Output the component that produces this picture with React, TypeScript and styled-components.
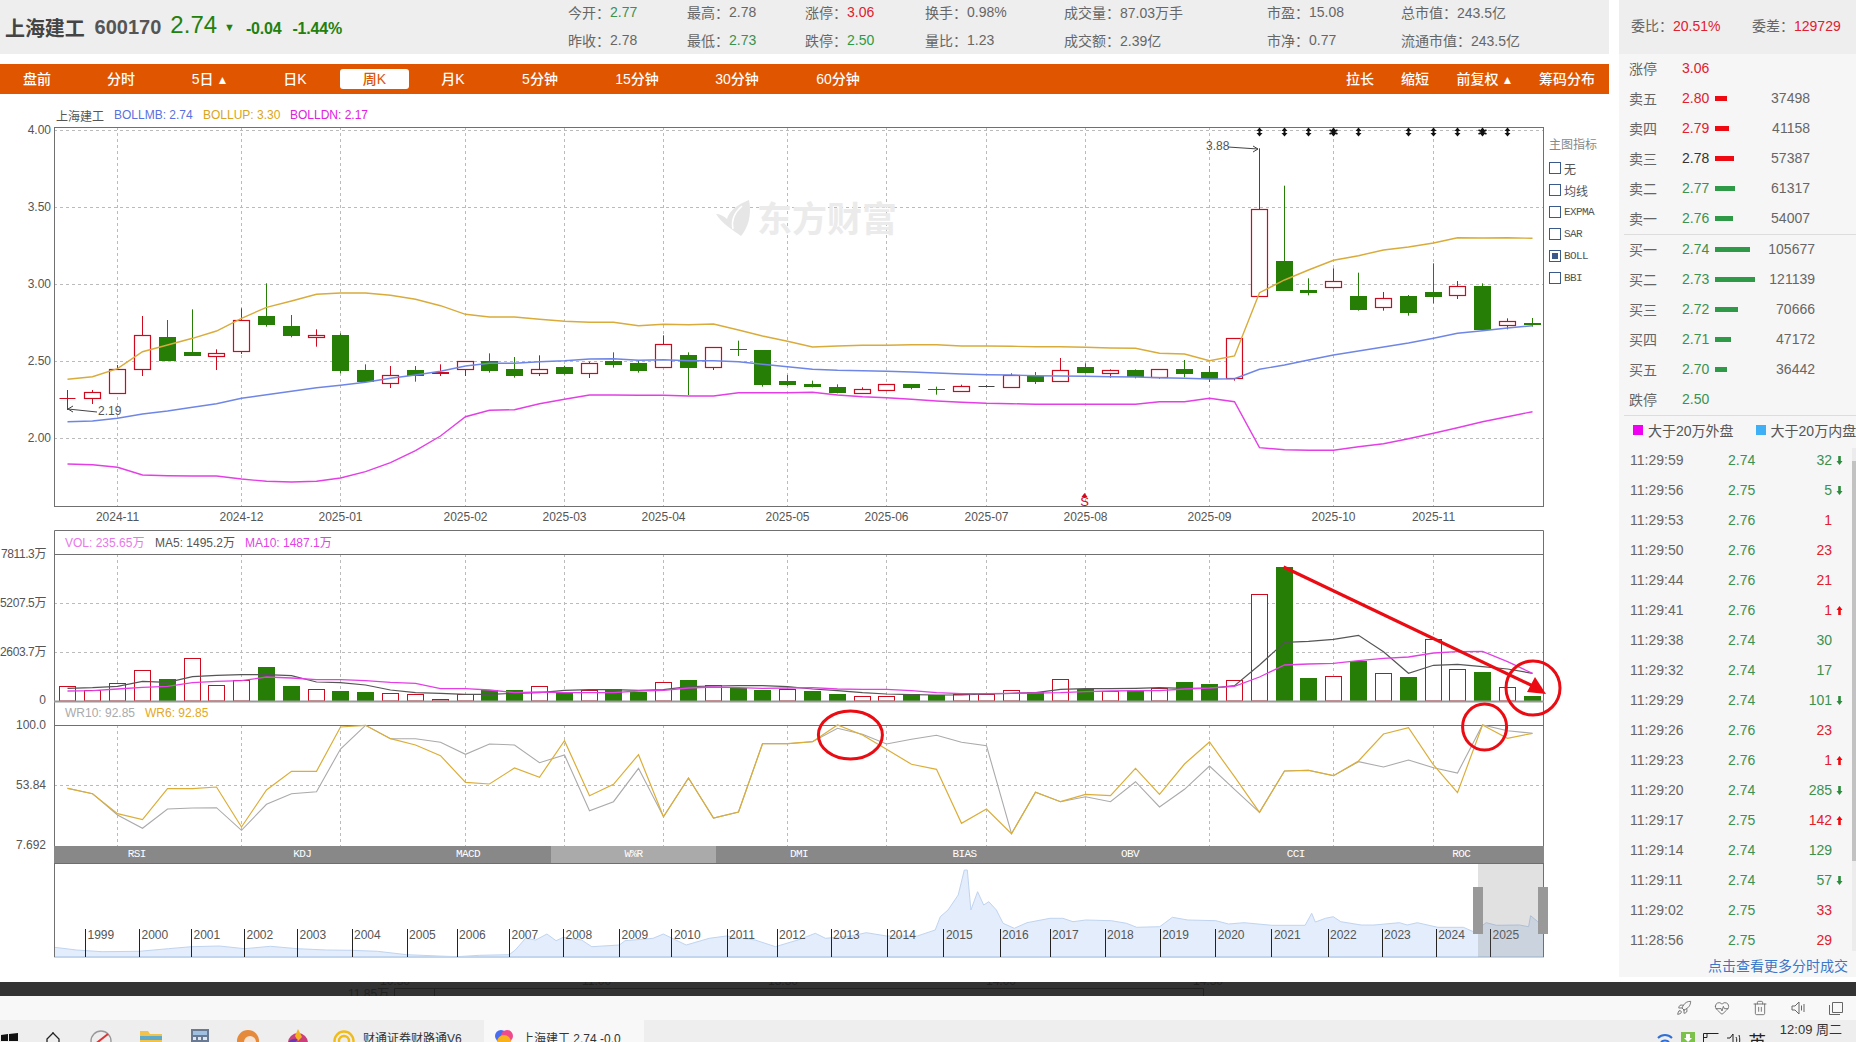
import React from 'react';
import styled, { createGlobalStyle } from 'styled-components';
import { Rocket, HeartPulse, Trash2 } from 'lucide-react';

const GlobalStyle = createGlobalStyle`
  html, body { margin: 0; padding: 0; background: #fff; width: 1856px; height: 1042px; overflow: hidden; }
  body { font-family: "Liberation Sans", "Noto Sans CJK SC", sans-serif; color: #555; }
  * { box-sizing: border-box; }
`;

const GREEN = '#267e07';
const RED = '#cf0a1f';
const cx = (i: number) => Math.round(67.4 + i * 24.82) + 0.5;
const mainY = (z: number) => 100 + z / 3;
const lowY = (z: number) => 525 + z / 3;

type C = [string, number, number, number, number];
const candles: C[] = [
  ['d', 895, 895, 870, 930], ['r', 877, 895, 870, 912], ['r', 808, 878, 795, 878], ['r', 706, 808, 648, 828],
  ['g', 711, 783, 660, 783], ['g', 756, 768, 628, 768], ['r', 760, 767, 748, 810], ['r', 661, 752, 625, 762],
  ['g', 648, 674, 550, 680], ['g', 678, 707, 645, 712], ['r', 706, 712, 688, 740], ['g', 705, 812, 700, 820],
  ['g', 810, 845, 793, 848], ['r', 826, 850, 798, 864], ['g', 810, 827, 798, 845], ['f', 817, 821, 793, 828],
  ['r', 784, 808, 784, 828], ['g', 784, 812, 760, 818], ['g', 807, 827, 771, 833], ['r', 808, 820, 766, 828],
  ['g', 801, 821, 797, 824], ['r', 790, 818, 785, 834], ['g', 783, 794, 757, 803], ['g', 789, 812, 782, 818],
  ['r', 733, 802, 706, 802], ['g', 765, 803, 757, 885], ['r', 742, 802, 742, 810], ['g', 747, 751, 722, 768],
  ['g', 750, 855, 750, 860], ['g', 843, 855, 825, 858], ['g', 852, 860, 842, 862], ['g', 861, 878, 853, 880],
  ['r', 868, 878, 862, 880], ['r', 853, 871, 853, 873], ['g', 852, 863, 852, 868], ['g', 866, 869, 860, 884],
  ['r', 859, 872, 854, 876], ['k', 859, 859, 855, 862], ['r', 826, 860, 820, 862], ['g', 827, 845, 816, 852],
  ['r', 811, 844, 774, 845], ['g', 802, 818, 790, 820], ['r', 811, 820, 808, 833], ['g', 811, 832, 808, 835],
  ['r', 808, 832, 808, 836], ['g', 807, 821, 780, 832], ['g', 817, 836, 798, 846], ['r', 715, 835, 715, 842],
  ['r', 328, 589, 145, 589], ['g', 483, 572, 257, 572], ['g', 570, 578, 535, 586], ['r', 544, 562, 505, 566],
  ['g', 588, 630, 518, 632], ['r', 595, 620, 576, 632], ['g', 588, 638, 585, 647], ['g', 576, 590, 490, 610],
  ['r', 558, 586, 543, 597], ['g', 558, 690, 550, 690], ['r', 663, 674, 655, 688], ['g', 669, 675, 654, 680],
];

const bollUp = [838, 830, 806, 755, 735, 715, 693, 655, 622, 603, 583, 579, 579, 586, 598, 617, 643, 651, 651, 658, 664, 667, 667, 677, 673, 674, 672, 690, 708, 724, 741, 738, 736, 736, 734, 734, 738, 738, 739, 740, 740, 742, 744, 745, 760, 762, 782, 768, 578, 540, 510, 481, 467, 450, 441, 429, 413, 414, 413, 415];
const bollMid = [965, 963, 955, 942, 933, 922, 911, 895, 884, 874, 863, 856, 847, 835, 825, 814, 798, 790, 790, 785, 782, 777, 776, 781, 779, 782, 782, 785, 793, 800, 808, 811, 812, 814, 816, 819, 822, 824, 825, 827, 828, 829, 830, 831, 833, 835, 837, 836, 808, 795, 780, 765, 753, 741, 729, 715, 700, 692, 684, 677];
const bollDn = [1092, 1094, 1102, 1125, 1127, 1128, 1128, 1137, 1144, 1146, 1144, 1134, 1115, 1088, 1052, 1008, 950, 931, 929, 911, 898, 885, 885, 886, 886, 888, 888, 878, 878, 878, 877, 885, 890, 893, 898, 903, 907, 910, 911, 913, 913, 913, 913, 913, 905, 905, 895, 905, 1043, 1049, 1051, 1051, 1040, 1031, 1016, 1000, 983, 965, 950, 935];

const volTop = [484, 495, 475, 436, 462, 400, 481, 466, 426, 483, 493, 498, 501, 505, 508, 523, 508, 495, 495, 484, 500, 494, 493, 500, 472, 465, 481, 488, 495, 493, 498, 507, 514, 514, 507, 511, 507, 507, 496, 502, 463, 493, 498, 495, 488, 471, 477, 466, 208, 126, 459, 454, 408, 445, 456, 343, 433, 441, 487, 513];
const volGreen = new Set([4, 8, 9, 11, 12, 17, 18, 20, 22, 23, 25, 27, 28, 30, 31, 34, 35, 39, 41, 43, 45, 46, 49, 50, 52, 54, 57, 59]);
const ma5 = [490, 488, 484, 469, 472, 455, 451, 449, 449, 452, 471, 473, 480, 495, 503, 505, 508, 508, 505, 503, 496, 494, 494, 496, 494, 485, 483, 482, 482, 485, 492, 497, 503, 507, 509, 510, 510, 507, 505, 503, 493, 491, 491, 490, 488, 490, 490, 482, 420, 352, 349, 343, 331, 380, 445, 421, 418, 425, 432, 445];
const ma10 = [498, 497, 492, 487, 484, 473, 469, 467, 456, 459, 464, 464, 467, 472, 475, 491, 491, 495, 503, 501, 503, 503, 503, 498, 496, 489, 486, 488, 490, 489, 488, 492, 493, 493, 497, 503, 506, 506, 505, 504, 503, 500, 498, 497, 497, 492, 489, 484, 456, 420, 417, 415, 407, 400, 396, 384, 380, 379, 410, 445];
const wr6 = [790, 806, 866, 884, 791, 791, 786, 906, 795, 739, 739, 606, 601, 641, 660, 692, 772, 777, 729, 757, 647, 812, 778, 689, 875, 759, 879, 861, 656, 656, 650, 600, 630, 673, 718, 733, 895, 852, 926, 802, 830, 808, 812, 730, 808, 717, 651, 755, 862, 738, 736, 752, 708, 627, 608, 720, 803, 600, 640, 625];
const wr10 = [790, 806, 870, 910, 852, 849, 848, 916, 838, 806, 800, 672, 601, 641, 641, 652, 688, 657, 660, 713, 690, 857, 830, 730, 875, 759, 879, 861, 656, 656, 650, 610, 628, 657, 643, 631, 652, 662, 926, 802, 830, 815, 830, 770, 846, 793, 723, 793, 862, 738, 736, 752, 710, 726, 705, 728, 744, 600, 617, 625];

const gridX = [2, 7, 11, 16, 20, 24, 29, 33, 37, 41, 46, 51, 55].map(cx);
const monthLabels = ['2024-11', '2024-12', '2025-01', '2025-02', '2025-03', '2025-04', '2025-05', '2025-06', '2025-07', '2025-08', '2025-09', '2025-10', '2025-11'];
const toPoints = (a: number[], f: (z: number) => number) => a.map((z, i) => `${cx(i)},${f(z).toFixed(1)}`).join(' ');

const yearX = [85, 139, 191, 244, 297, 351.5, 406.6, 456.6, 509, 563, 619, 671.4, 726.5, 776.5, 830.6, 886.7, 943.4, 999.5, 1049.5, 1104.6, 1159.7, 1215.3, 1271.4, 1327.5, 1381.6, 1435.7, 1490];
const miniA = [[107, 292], [150, 300], [200, 305], [273, 304], [330, 296], [375, 290], [430, 288], [479, 296], [530, 289], [583, 296], [640, 300], [689, 301], [740, 304], [797, 314], [860, 318], [895, 320], [940, 316], [998, 314], [1010, 300], [1030, 265], [1050, 270], [1072, 252], [1090, 272], [1104, 262], [1140, 270], [1160, 290], [1214, 285], [1225, 272], [1280, 265], [1300, 252], [1345, 285], [1390, 265], [1424, 258], [1480, 270], [1520, 290]];
const miniB = [[0, 268], [30, 250], [50, 265], [100, 258], [130, 248], [170, 258], [230, 258], [265, 240], [275, 200], [290, 180], [310, 135], [322, 60], [328, 60], [335, 180], [348, 125], [360, 165], [370, 155], [385, 180], [398, 220], [420, 235], [445, 218], [490, 205], [515, 205], [535, 215], [560, 210], [610, 212], [640, 220], [660, 232], [705, 230], [730, 202], [760, 210], [815, 212], [840, 222], [870, 218], [925, 226], [990, 226], [1003, 190], [1010, 216], [1030, 205], [1045, 200], [1060, 215], [1100, 225], [1125, 225], [1175, 218], [1190, 225], [1210, 218], [1250, 232], [1300, 232], [1320, 245], [1345, 218], [1365, 226], [1410, 225], [1428, 230], [1432, 197], [1446, 215], [1457, 215]];
const miniPts = [
  ...miniA.map(([x, y]) => `${(x / 1.96).toFixed(1)},${(850 + y / 3).toFixed(1)}`),
  ...miniB.map(([x, y]) => `${(800 + x / 1.96).toFixed(1)},${(850 + y / 3).toFixed(1)}`),
];

const Page = styled.div`
  width: 1856px;
  height: 1042px;
  display: flex;
  flex-direction: column;
  overflow: hidden;
  background: #fff;
`;
const Top = styled.div`
  display: flex;
  height: 982px;
`;
const LeftCol = styled.div`
  width: 1609px;
  flex: none;
`;
const RightCol = styled.div`
  width: 237px;
  height: 977px;
  margin-left: 10px;
  background: #f6f6f6;
  flex: none;
  overflow: hidden;
`;

const Header = styled.div`
  height: 54px;
  background: #eee;
  display: flex;
`;
const TitleBlock = styled.div`
  width: 568px;
  flex: none;
  padding-left: 5px;
  display: flex;
  align-items: center;
`;
const StockName = styled.span`
  font: 700 20px "Noto Sans CJK SC", sans-serif;
  color: #444;
  letter-spacing: -0.1px;
`;
const StockCode = styled.span`
  font-size: 20px;
  font-weight: 700;
  color: #555;
  margin-left: 10px;
`;
const LastPrice = styled.span`
  font-size: 24px;
  color: #23800f;
  margin-left: 9px;
  margin-top: -4px;
`;
const DownMark = styled.span`
  font-size: 11px;
  color: #23800f;
  margin-left: 7px;
`;
const Change = styled.span<{ $gap: number }>`
  font-size: 16px;
  font-weight: 700;
  letter-spacing: -0.2px;
  color: #23800f;
  margin-left: ${p => p.$gap}px;
  margin-top: 3px;
`;
const StatGrid = styled.div`
  display: grid;
  grid-template-columns: 119px 118px 120px 139px 203px 134px 140px;
  grid-template-rows: 24px 32px;
`;
const Stat = styled.div`
  font-size: 14px;
  color: #666;
  display: flex;
  align-items: center;
  white-space: nowrap;
`;
const Val = styled.span<{ $c?: string }>`
  color: ${p => p.$c || '#666'};
`;

const Toolbar = styled.div`
  height: 30px;
  margin-top: 10px;
  background: #e05500;
  display: flex;
  align-items: center;
`;
const Tab = styled.div<{ $w: number; $push?: boolean }>`
  width: ${p => p.$w}px;
  flex: none;
  margin-left: ${p => (p.$push ? 'auto' : '0')};
  display: flex;
  justify-content: center;
`;
const TabLabel = styled.span<{ $active?: boolean }>`
  font: 500 14px "Liberation Sans", "Noto Sans CJK SC", sans-serif;
  height: 20px;
  line-height: 20px;
  text-align: center;
  white-space: nowrap;
  color: ${p => (p.$active ? '#e05500' : '#fff')};
  background: ${p => (p.$active ? '#fff' : 'transparent')};
  width: ${p => (p.$active ? '69px' : 'auto')};
  border-radius: ${p => (p.$active ? '3px' : '0')};
`;
const TinyUp = styled.span`
  font-size: 12px;
  margin-left: 3px;
`;

const LegendLine = styled.div`
  height: 33px;
  padding-left: 56px;
  display: flex;
  align-items: center;
  font-size: 12px;
  padding-top: 9px;
`;
const LegendItem = styled.span<{ $c: string; $w: number }>`
  color: ${p => p.$c};
  width: ${p => p.$w}px;
  flex: none;
`;

const MainRow = styled.div`
  display: flex;
  height: 403px;
`;
const ChartSvg = styled.svg`
  display: block;
  flex: none;
  overflow: visible;
  font-family: "Liberation Sans", "Noto Sans CJK SC", sans-serif;
  font-size: 12px;
  fill: #555;
`;
const BandSvg = styled.svg`
  display: block;
  font-family: "Liberation Sans", "Noto Sans CJK SC", sans-serif;
  font-size: 12px;
  fill: #222;
`;
const SidePanel = styled.div`
  padding: 9px 0 0 4px;
  width: 64px;
  flex: none;
`;
const SideTitle = styled.div`
  font-size: 12px;
  color: #888;
  height: 18px;
  line-height: 18px;
  margin-bottom: 3px;
  white-space: nowrap;
`;
const SideRow = styled.div`
  height: 22px;
  display: flex;
  align-items: center;
  gap: 3px;
`;
const CheckBox = styled.span<{ $on?: boolean }>`
  width: 12px;
  height: 12px;
  flex: none;
  border: 1px solid #3b5a8c;
  background: #fff;
  display: flex;
  align-items: center;
  justify-content: center;
  &::after {
    content: '';
    width: 6px;
    height: 6px;
    background: ${p => (p.$on ? '#3b5a8c' : 'transparent')};
  }
`;
const SideLabel = styled.span<{ $mono?: boolean }>`
  font: ${p => (p.$mono ? '11px "Liberation Mono", monospace' : '12px "Noto Sans CJK SC", sans-serif')};
  letter-spacing: ${p => (p.$mono ? '-0.6px' : '0')};
  color: #555;
`;

const TabsBar = styled.div`
  display: grid;
  grid-template-columns: repeat(9, 1fr);
  width: 1490px;
  height: 18px;
  margin-left: 54px;
  background: #888;
  border-bottom: 1px solid #6e6e6e;
`;
const IndTab = styled.div<{ $active?: boolean }>`
  background: ${p => (p.$active ? '#aaa' : 'transparent')};
  color: #fff;
  font: 11px/17px "Liberation Mono", monospace;
  letter-spacing: -0.6px;
  text-align: center;
`;

const DarkBand = styled.div`
  height: 14px;
  background: #333;
  overflow: hidden;
`;
const Strip = styled.div`
  height: 24px;
  background: #f8f8f8;
  display: flex;
  justify-content: flex-end;
  align-items: center;
  gap: 22px;
  padding-right: 12px;
  color: #666;
`;
const Taskbar = styled.div`
  height: 22px;
  background: #eee;
  display: flex;
  overflow: hidden;
`;
const TaskItem = styled.div<{ $w: number; $top?: number }>`
  width: ${p => p.$w}px;
  flex: none;
  display: flex;
  justify-content: center;
  padding-top: ${p => p.$top ?? 8}px;
`;
const TaskApp = styled.div<{ $w: number; $pad: number; $active?: boolean }>`
  width: ${p => p.$w}px;
  flex: none;
  padding: 8px 0 0 ${p => p.$pad}px;
  display: flex;
  gap: 8px;
  background: ${p => (p.$active ? '#f8f8f8' : 'transparent')};
`;
const TaskText = styled.span`
  font-size: 12px;
  line-height: 22px;
  color: #333;
  white-space: nowrap;
`;
const Tray = styled.div`
  margin-left: auto;
  display: flex;
  padding-right: 14px;
`;
const TrayGlyph = styled.span`
  width: 23px;
  text-align: center;
  font: 18px/18px "Noto Sans CJK SC", sans-serif;
  color: #222;
  margin-top: 12px;
`;
const Clock = styled.span`
  margin-left: 11px;
  font-size: 13px;
  line-height: 20px;
  color: #333;
  white-space: nowrap;
`;

const WeiBar = styled.div`
  height: 54px;
  background: #eee;
  display: flex;
  align-items: center;
  font-size: 14px;
  color: #666;
  padding: 0 0 4px 12px;
`;
const WeiItem = styled.span<{ $w: number }>`
  width: ${p => p.$w}px;
  flex: none;
  white-space: nowrap;
`;
const WeiVal = styled.span`
  color: #e0202f;
`;
const Book = styled.div`
  padding-left: 10px;
`;
const BookSection = styled.div`
  border-bottom: 1px solid #ddd;
  margin-left: -5px;
  padding-left: 5px;
  padding-bottom: 1px;
  margin-top: -1px;
`;
const BookRow = styled.div`
  height: 30px;
  display: flex;
  align-items: center;
  font-size: 14px;
`;
const BookLabel = styled.span`
  width: 53px;
  flex: none;
  color: #666;
`;
const BookPrice = styled.span<{ $c: string }>`
  width: 33px;
  flex: none;
  color: ${p => p.$c};
`;
const BarCell = styled.span`
  width: 40px;
  flex: none;
  display: flex;
`;
const VolBar = styled.span<{ $w: number; $c: string }>`
  width: ${p => p.$w}px;
  height: 5px;
  background: ${p => p.$c};
`;
const BookQty = styled.span<{ $w: number }>`
  width: ${p => p.$w}px;
  flex: none;
  text-align: right;
  color: #666;
`;
const BigLegend = styled.div`
  height: 30px;
  margin-top: -1px;
  display: flex;
  align-items: center;
  font: 14px "Liberation Sans", "Noto Sans CJK SC", sans-serif;
  color: #555;
  padding-left: 14px;
  white-space: nowrap;
`;
const Swatch = styled.span<{ $c: string; $gap: number }>`
  width: 10px;
  height: 10px;
  flex: none;
  background: ${p => p.$c};
  margin-right: 5px;
  margin-left: ${p => p.$gap}px;
`;
const TickList = styled.div`
  position: relative;
  height: 511px;
`;
const Track = styled.div`
  position: absolute;
  right: 0;
  top: 3px;
  width: 4px;
  height: 503px;
  background: #ececec;
`;
const Thumb = styled.div`
  margin-top: 13px;
  height: 400px;
  background: #c2c2c2;
`;
const TickRow = styled.div`
  height: 30px;
  display: flex;
  align-items: center;
  font-size: 14px;
  padding-left: 11px;
`;
const TickTime = styled.span`
  width: 98px;
  flex: none;
  color: #666;
`;
const TickPrice = styled.span`
  width: 34px;
  flex: none;
  color: #3a9150;
`;
const TickQty = styled.span<{ $c: string }>`
  width: 70px;
  flex: none;
  text-align: right;
  color: ${p => p.$c};
`;
const TickArrow = styled.svg`
  margin-left: 4px;
  flex: none;
`;
const MoreLink = styled.div`
  text-align: right;
  font-size: 14px;
  line-height: 20px;
  padding-right: 8px;
  color: #3a77c9;
`;

const statCells: [string, string, string?][] = [
  ['今开：', '2.77', '#3a9150'], ['最高：', '2.78'], ['涨停：', '3.06', '#e0202f'], ['换手：', '0.98%'], ['成交量：', '87.03万手'], ['市盈：', '15.08'], ['总市值：', '243.5亿'],
  ['昨收：', '2.78'], ['最低：', '2.73', '#3a9150'], ['跌停：', '2.50', '#2d9a44'], ['量比：', '1.23'], ['成交额：', '2.39亿'], ['市净：', '0.77'], ['流通市值：', '243.5亿'],
];

const tabs: [React.ReactNode, number, boolean?][] = [
  ['盘前', 74], ['分时', 94], [<>5日<TinyUp>▲</TinyUp></>, 84], ['日K', 86], ['周K', 73, true], ['月K', 84],
  ['5分钟', 90], ['15分钟', 104], ['30分钟', 96], ['60分钟', 106],
];
const tabsRight: [React.ReactNode, number][] = [
  ['拉长', 50], ['缩短', 60], [<>前复权<TinyUp>▲</TinyUp></>, 80], ['筹码分布', 84],
];

const BR = '#e0202f';
const BG = '#3a9150';
const sells: [string, string, string, number, string, string][] = [
  ['卖五', '2.80', BR, 12, '#ee0a10', '37498'],
  ['卖四', '2.79', BR, 14, '#ee0a10', '41158'],
  ['卖三', '2.78', '#333', 19, '#ee0a10', '57387'],
  ['卖二', '2.77', BG, 20, '#2e9a48', '61317'],
  ['卖一', '2.76', BG, 18, '#2e9a48', '54007'],
];
const buys: [string, string, number, string][] = [
  ['买一', '2.74', 35, '105677'], ['买二', '2.73', 40, '121139'], ['买三', '2.72', 23, '70666'], ['买四', '2.71', 16, '47172'], ['买五', '2.70', 12, '36442'],
];
const ticks: [string, string, string, string, string][] = [
  ['11:29:59', '2.74', '32', 'g', 'd'], ['11:29:56', '2.75', '5', 'g', 'd'], ['11:29:53', '2.76', '1', 'r', ''], ['11:29:50', '2.76', '23', 'r', ''],
  ['11:29:44', '2.76', '21', 'r', ''], ['11:29:41', '2.76', '1', 'r', 'u'], ['11:29:38', '2.74', '30', 'g', ''], ['11:29:32', '2.74', '17', 'g', ''],
  ['11:29:29', '2.74', '101', 'g', 'd'], ['11:29:26', '2.76', '23', 'r', ''], ['11:29:23', '2.76', '1', 'r', 'u'], ['11:29:20', '2.74', '285', 'g', 'd'],
  ['11:29:17', '2.75', '142', 'r', 'u'], ['11:29:14', '2.74', '129', 'g', ''], ['11:29:11', '2.74', '57', 'g', 'd'], ['11:29:02', '2.75', '33', 'r', ''],
  ['11:28:56', '2.75', '29', 'r', ''],
];

const Dash = { stroke: '#bbb', strokeWidth: 1, strokeDasharray: '3 3' };
const FRAME = '#707070';

function MainChart() {
  const marks = [48, 49, 50, 51, 52, 54, 55, 56, 57, 58];
  return (
    <ChartSvg width={1545} height={403} viewBox="0 127 1545 403">
      {gridX.map(x => <line key={x} x1={x} x2={x} y1={127} y2={506} {...Dash} />)}
      {[130, 207, 284, 361, 438].map(y => <line key={y} x1={54} x2={1543} y1={y + 0.5} y2={y + 0.5} {...Dash} />)}
      <rect x={54.5} y={127.5} width={1489} height={379} fill="none" stroke={FRAME} />
      {['4.00', '3.50', '3.00', '2.50', '2.00'].map((t, i) => <text key={t} x={51} y={134 + i * 77} textAnchor="end">{t}</text>)}
      {monthLabels.map((t, i) => <text key={t} x={gridX[i]} y={521} textAnchor="middle">{t}</text>)}
      <path d="M749 200C752 215 748 228 741 236C733 230 722 224 716 214C720 214 724 216 727 219C729 211 738 204 749 200Z" fill="#e6e6e6" />
      <path d="M742 206C735 212 731 220 733 229" stroke="#fff" strokeWidth={1.5} fill="none" />
      <text x={757} y={232} fontSize={35} fontWeight={700} fill="#ebebeb" fontFamily='"Noto Sans CJK SC", sans-serif'>东方财富</text>
      {candles.map(([t, bt, bb, wt, wb], i) => {
        const x = cx(i);
        const col = t === 'g' ? GREEN : t === 'k' ? '#444' : RED;
        const top = Math.round(mainY(bt));
        const h = Math.max(Math.round(mainY(bb)) - top, 1);
        return (
          <g key={i}>
            <line x1={x} x2={x} y1={mainY(wt)} y2={mainY(wb)} stroke={col} />
            {t === 'r' && <rect x={x - 8} y={top + 0.5} width={16} height={h} fill="#fff" stroke={col} strokeWidth={1.2} />}
            {t === 'g' && <rect x={x - 8.5} y={top} width={17} height={h} fill={col} />}
            {t === 'f' && <rect x={x - 8.5} y={top} width={17} height={2} fill={col} />}
            {(t === 'd' || t === 'k') && <line x1={x - 8} x2={x + 8} y1={top + 0.5} y2={top + 0.5} stroke={col} />}
          </g>
        );
      })}
      <polyline points={toPoints(bollUp, mainY)} fill="none" stroke="#d9ab3a" strokeWidth={1.4} />
      <polyline points={toPoints(bollMid, mainY)} fill="none" stroke="#6f86e6" strokeWidth={1.4} />
      <polyline points={toPoints(bollDn, mainY)} fill="none" stroke="#e43fe6" strokeWidth={1.4} />
      <text x={1206} y={150} fontSize={12} fill="#555">3.88</text>
      <path d="M1228 147L1258 149M1253 146L1258 149L1253 152" stroke="#444" fill="none" />
      <text x={98} y={415} fontSize={12} fill="#555">2.19</text>
      <path d="M97 412L68 409M73 406L68 409L73 412" stroke="#444" fill="none" />
      {marks.map(i => {
        const x = cx(i);
        const star = i === 51 || i === 57;
        return (
          <g key={i} fill="#111">
            <path d={`M${x} 127.5l-3 3.5h2v2h-2l3 3.5 3-3.5h-2v-2h2z`} />
            {star && <path d={`M${x - 4} 130l8 4M${x + 4} 130l-8 4`} stroke="#111" strokeWidth={1.6} />}
          </g>
        );
      })}
      <path d="M1084.5 493l-3 4h6z" fill={RED} />
      <text x={1084.5} y={506} fontSize={13} textAnchor="middle" fill={RED}>S</text>
    </ChartSvg>
  );
}

function LowerChart() {
  const base = lowY(528);
  return (
    <ChartSvg width={1609} height={316} viewBox="0 530 1609 316">
      {gridX.map(x => (
        <g key={x}>
          <line x1={x} x2={x} y1={554} y2={701} {...Dash} />
          <line x1={x} x2={x} y1={725} y2={846} {...Dash} />
        </g>
      ))}
      {[603.5, 652.5, 785.5].map(y => <line key={y} x1={54} x2={1543} y1={y} y2={y} {...Dash} />)}
      <path d="M54.5 846V530.5H1543.5V846M54 554.5H1544M54 725.5H1544" fill="none" stroke={FRAME} />
      <text x={65} y={547} fill="#e878e8">VOL: 235.65万</text>
      <text x={155} y={547} fill="#555">MA5: 1495.2万</text>
      <text x={245} y={547} fill="#e43fe6">MA10: 1487.1万</text>
      <text x={46} y={558} textAnchor="end" letterSpacing={-0.4}>7811.3万</text>
      <text x={46} y={607} textAnchor="end" letterSpacing={-0.4}>5207.5万</text>
      <text x={46} y={656} textAnchor="end" letterSpacing={-0.4}>2603.7万</text>
      <text x={46} y={704} textAnchor="end">0</text>
      <text x={46} y={729} textAnchor="end">100.0</text>
      <text x={46} y={789} textAnchor="end">53.84</text>
      <text x={46} y={849} textAnchor="end">7.692</text>
      <text x={65} y={717} fill="#aaa">WR10: 92.85</text>
      <text x={145} y={717} fill="#e5a820">WR6: 92.85</text>
      {volTop.map((z, i) => {
        const x = cx(i);
        const top = Math.round(lowY(z));
        return volGreen.has(i)
          ? <rect key={i} x={x - 8.5} y={top} width={17} height={base - top} fill={GREEN} />
          : <rect key={i} x={x - 8} y={top + 0.5} width={16} height={base - top - 0.5} fill="#fff" stroke={RED} />;
      })}
      <line x1={54} x2={1544} y1={base + 0.5} y2={base + 0.5} stroke="#999" strokeWidth={2} />
      <polyline points={toPoints(ma5, lowY)} fill="none" stroke="#555" strokeWidth={1.2} />
      <polyline points={toPoints(ma10, lowY)} fill="none" stroke="#e43fe6" strokeWidth={1.3} />
      <polyline points={toPoints(wr10, lowY)} fill="none" stroke="#aaa" strokeWidth={1.1} />
      <polyline points={toPoints(wr6, lowY)} fill="none" stroke="#dcae38" strokeWidth={1.2} />
      <g fill="none" stroke="#ea0c12" strokeWidth={3}>
        <ellipse cx={850.4} cy={735} rx={32} ry={24} />
        <ellipse cx={1484.6} cy={727} rx={22} ry={23} />
        <ellipse cx={1533} cy={688} rx={27} ry={27} />
        <line x1={1283.6} y1={567} x2={1535} y2={687} strokeWidth={3.2} />
      </g>
      <path d="M1546 694L1527 692L1535 677Z" fill="#ea0c12" />
    </ChartSvg>
  );
}

function MiniChart() {
  const area = `54.6,958 ${miniPts.join(' ')} 1543.5,958`;
  return (
    <ChartSvg width={1609} height={94} viewBox="0 864 1609 94">
      <polygon points={area} fill="#e3edfb" />
      <polyline points={miniPts.join(' ')} fill="none" stroke="#c0d4f0" />
      <line x1={54} x2={1544} y1={957} y2={957} stroke="#c3d6ef" strokeWidth={2} />
      <path d="M54.5 864V957M1543.5 864V957" stroke={FRAME} />
      {yearX.map((x, i) => (
        <g key={x}>
          <line x1={Math.round(x) + 0.5} x2={Math.round(x) + 0.5} y1={929} y2={957} stroke="#222" />
          <text x={x + 2.5} y={939}>{1999 + i}</text>
        </g>
      ))}
      <rect x={1478} y={864} width={65} height={93} fill="#777" fillOpacity={0.22} />
      <rect x={1473} y={887} width={10} height={47} fill="#999" />
      <rect x={1538} y={887} width={10} height={47} fill="#999" />
    </ChartSvg>
  );
}

const Arrow = ({ up }: { up: boolean }) => (
  <TickArrow width={7} height={9} viewBox="0 0 7 9">
    <path d={up ? 'M3.5 0L6.5 4H4.8V9H2.2V4H.5Z' : 'M3.5 9L6.5 5H4.8V0H2.2V5H.5Z'} fill={up ? '#ee0a10' : '#2e8a3e'} />
  </TickArrow>
);

export default function App() {
  return (
    <Page>
      <GlobalStyle />
      <Top>
        <LeftCol>
          <Header>
            <TitleBlock>
              <StockName>上海建工</StockName>
              <StockCode>600170</StockCode>
              <LastPrice>2.74</LastPrice>
              <DownMark>▼</DownMark>
              <Change $gap={11}>-0.04</Change>
              <Change $gap={11}>-1.44%</Change>
            </TitleBlock>
            <StatGrid>
              {statCells.map(([l, v, c]) => (
                <Stat key={l}>{l}<Val $c={c}>{v}</Val></Stat>
              ))}
            </StatGrid>
          </Header>
          <Toolbar>
            {tabs.map(([t, w, on], i) => (
              <Tab key={i} $w={w}><TabLabel $active={on}>{t}</TabLabel></Tab>
            ))}
            {tabsRight.map(([t, w], i) => (
              <Tab key={i} $w={w} $push={i === 0}><TabLabel>{t}</TabLabel></Tab>
            ))}
          </Toolbar>
          <LegendLine>
            <LegendItem $c="#555" $w={58}>上海建工</LegendItem>
            <LegendItem $c="#5a6fe0" $w={89}>BOLLMB: 2.74</LegendItem>
            <LegendItem $c="#d9a520" $w={87}>BOLLUP: 3.30</LegendItem>
            <LegendItem $c="#e020e0" $w={90}>BOLLDN: 2.17</LegendItem>
          </LegendLine>
          <MainRow>
            <MainChart />
            <SidePanel>
              <SideTitle>主图指标</SideTitle>
              {['无', '均线', 'EXPMA', 'SAR', 'BOLL', 'BBI'].map((t, i) => (
                <SideRow key={t}>
                  <CheckBox $on={t === 'BOLL'} />
                  <SideLabel $mono={i > 1}>{t}</SideLabel>
                </SideRow>
              ))}
            </SidePanel>
          </MainRow>
          <LowerChart />
          <TabsBar>
            {['RSI', 'KDJ', 'MACD', 'W%R', 'DMI', 'BIAS', 'OBV', 'CCI', 'ROC'].map(t => (
              <IndTab key={t} $active={t === 'W%R'}>{t}</IndTab>
            ))}
          </TabsBar>
          <MiniChart />
        </LeftCol>
        <RightCol>
          <WeiBar>
            <WeiItem $w={121}>委比：<WeiVal>20.51%</WeiVal></WeiItem>
            <WeiItem $w={100}>委差：<WeiVal>129729</WeiVal></WeiItem>
          </WeiBar>
          <Book>
            <BookSection>
              <BookRow><BookLabel>涨停</BookLabel><BookPrice $c={BR}>3.06</BookPrice></BookRow>
              {sells.map(([l, p, c, w, bc, q]) => (
                <BookRow key={l}>
                  <BookLabel>{l}</BookLabel>
                  <BookPrice $c={c}>{p}</BookPrice>
                  <BarCell><VolBar $w={w} $c={bc} /></BarCell>
                  <BookQty $w={55}>{q}</BookQty>
                </BookRow>
              ))}
            </BookSection>
            <BookSection>
              {buys.map(([l, p, w, q]) => (
                <BookRow key={l}>
                  <BookLabel>{l}</BookLabel>
                  <BookPrice $c={BG}>{p}</BookPrice>
                  <BarCell><VolBar $w={w} $c="#2e9a48" /></BarCell>
                  <BookQty $w={60}>{q}</BookQty>
                </BookRow>
              ))}
              <BookRow><BookLabel>跌停</BookLabel><BookPrice $c={BG}>2.50</BookPrice></BookRow>
            </BookSection>
          </Book>
          <BigLegend>
            <Swatch $c="#f000f0" $gap={0} />大于20万外盘
            <Swatch $c="#3fb0f5" $gap={22} />大于20万内盘
          </BigLegend>
          <TickList>
            {ticks.map(([t, p, q, c, a]) => (
              <TickRow key={t}>
                <TickTime>{t}</TickTime>
                <TickPrice>{p}</TickPrice>
                <TickQty $c={c === 'r' ? BR : BG}>{q}</TickQty>
                {a && <Arrow up={a === 'u'} />}
              </TickRow>
            ))}
            <Track><Thumb /></Track>
          </TickList>
          <MoreLink>点击查看更多分时成交</MoreLink>
        </RightCol>
      </Top>
      <DarkBand>
        <BandSvg width={1856} height={14} viewBox="0 982 1856 14">
          <text x={380} y={985}>10:30</text>
          <text x={582} y={985}>11:00</text>
          <text x={768} y={985}>13:30</text>
          <text x={986} y={985}>14:00</text>
          <text x={1193} y={985}>14:30</text>
          <text x={348} y={998}>11.85万</text>
          <path d="M394.5 988.5H1203.5V996M434.5 988.5V996M394.5 988.5V996" stroke="#222" fill="none" />
        </BandSvg>
      </DarkBand>
      <Strip>
        <Rocket size={16} strokeWidth={1.3} />
        <HeartPulse size={16} strokeWidth={1.3} />
        <Trash2 size={16} strokeWidth={1.3} />
        <svg width={16} height={16} viewBox="0 0 16 16" fill="none" stroke="currentColor" strokeWidth={1}>
          <path d="M2 6h3l4-4v12l-4-4H2zM11.5 5.5v5M14 4v8" />
        </svg>
        <svg width={16} height={16} viewBox="0 0 16 16" fill="none" stroke="currentColor" strokeWidth={1}>
          <path d="M4.5 2.5h10v10h-10zM1.5 5v9.5H12" />
        </svg>
      </Strip>
      <Taskbar>
        <TaskItem $w={18} $top={13}>
          <svg width={17} height={17} viewBox="0 0 17 17" fill="#111"><path d="M0 2l7-1v7H0zM8 1l9-1v8H8zM0 9h7v7l-7-1zM8 9h9v8l-9-1z" /></svg>
        </TaskItem>
        <TaskItem $w={70} $top={12}>
          <svg width={18} height={18} viewBox="0 0 18 18" fill="none" stroke="#222" strokeWidth={1.3}><path d="M9 1L15 7v11M9 1L3 7v11M9 1v-1" /></svg>
        </TaskItem>
        <TaskItem $w={26} $top={9}>
          <svg width={24} height={24} viewBox="0 0 24 24" fill="none"><circle cx={12} cy={12} r={10} stroke="#999" strokeWidth={1.4} /><path d="M5 16L19 5" stroke="#d33" strokeWidth={2} /></svg>
        </TaskItem>
        <TaskItem $w={74} $top={11}>
          <svg width={22} height={22} viewBox="0 0 22 22"><path d="M0 0h8l2 3h12v19H0z" fill="#f1c34a" /><rect y={5} width={22} height={4} fill="#5fa9c9" /></svg>
        </TaskItem>
        <TaskItem $w={24} $top={9}>
          <svg width={18} height={24} viewBox="0 0 18 24"><rect width={18} height={24} fill="#6a7a92" /><rect x={2} y={2} width={14} height={4} fill="#9fc0e0" /><path d="M2 8h3v3H2zM7 8h3v3H7zM12 8h4v3h-4z" fill="#dfe7f0" /></svg>
        </TaskItem>
        <TaskItem $w={72} $top={9}>
          <svg width={22} height={24} viewBox="0 0 22 24"><circle cx={11} cy={12} r={11} fill="#e58a3a" /><circle cx={13} cy={13} r={6} fill="#f8e4d4" /></svg>
        </TaskItem>
        <TaskItem $w={28} $top={9}>
          <svg width={24} height={24} viewBox="0 0 24 24"><circle cx={12} cy={14} r={10} fill="#c9407a" /><path d="M12 0l4 8-4 4-3-5z" fill="#f5b21c" /><path d="M2 14c3-5 8-5 10-3-4 1-4 7 2 8" fill="#6a3ab0" /></svg>
        </TaskItem>
        <TaskApp $w={172} $pad={21}>
          <svg width={22} height={24} viewBox="0 0 22 24" fill="none" stroke="#f0bc1a" strokeWidth={2.4}><circle cx={11} cy={13} r={9.5} /><circle cx={11} cy={13} r={5} /></svg>
          <TaskText>财通证券财路通V6</TaskText>
        </TaskApp>
        <TaskApp $w={160} $pad={10} $active>
          <svg width={20} height={24} viewBox="0 0 20 24"><circle cx={7} cy={8} r={6} fill="#4a6cf0" /><circle cx={13} cy={8} r={6} fill="#f04a8a" /><circle cx={10} cy={14} r={7} fill="#f7b21c" /></svg>
          <TaskText>上海建工 2.74 -0.0</TaskText>
        </TaskApp>
        <Tray>
          <TaskItem $w={23} $top={11}>
            <svg width={18} height={18} viewBox="0 0 18 18" fill="none" stroke="#2f6fd6" strokeWidth={2}><path d="M2 7c4-4 10-4 14 0M5 11c2-2 6-2 8 0" /></svg>
          </TaskItem>
          <TaskItem $w={23} $top={11}>
            <svg width={14} height={16} viewBox="0 0 14 16"><path d="M0 1h14v12H0z" fill="#7cc24a" /><path d="M5 3h4v4h2l-4 4-4-4h2z" fill="#fff" /></svg>
          </TaskItem>
          <TaskItem $w={23} $top={13}>
            <svg width={16} height={14} viewBox="0 0 16 14" fill="none" stroke="#222"><path d="M.5.5h15M.5.5v13M4 .5v4H.5" /></svg>
          </TaskItem>
          <TaskItem $w={23} $top={13}>
            <svg width={16} height={14} viewBox="0 0 16 14" fill="none" stroke="#222"><path d="M1 5h3l3-4v13M10 4c1 2 1 4 0 6M13 2c1 3 1 7 0 10" /></svg>
          </TaskItem>
          <TrayGlyph>英</TrayGlyph>
          <Clock>12:09 周二</Clock>
        </Tray>
      </Taskbar>
    </Page>
  );
}
